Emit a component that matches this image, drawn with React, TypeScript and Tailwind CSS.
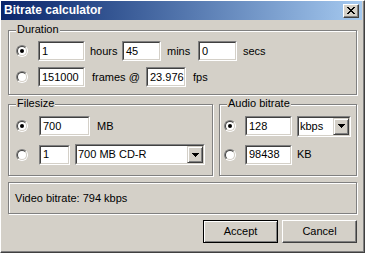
import React from "react";

const Radio = ({ checked = false }: { checked?: boolean }) => (
  <span className="flex w-[12px] h-[12px] shrink-0 rounded-full border border-t-[#808080] border-l-[#808080] border-r-white border-b-white">
    <span className="flex w-full h-full items-center justify-center rounded-full bg-white border border-t-[#404040] border-l-[#404040] border-r-[#d4d0c8] border-b-[#d4d0c8]">
      {checked && <span className="w-[4px] h-[4px] rounded-full bg-black" />}
    </span>
  </span>
);

const Field = ({ value, className }: { value: string; className: string }) => (
  <div className={`h-[20px] shrink-0 border border-t-[#808080] border-l-[#808080] border-r-white border-b-white ${className}`}>
    <div className="h-full flex items-center pl-[2px] bg-white border border-t-[#404040] border-l-[#404040] border-r-[#d4d0c8] border-b-[#d4d0c8]">
      {value}
    </div>
  </div>
);

const Combo = ({ value, className }: { value: string; className: string }) => (
  <div className={`h-[21px] shrink-0 border border-t-[#808080] border-l-[#808080] border-r-white border-b-white ${className}`}>
    <div className="h-full flex bg-white border border-t-[#404040] border-l-[#404040] border-r-[#d4d0c8] border-b-[#d4d0c8]">
      <span className="flex-1 flex items-center pl-[1px]">{value}</span>
      <span className="w-[16px] h-full flex items-center justify-center bg-[#d4d0c8] border border-t-[#d4d0c8] border-l-[#d4d0c8] border-r-[#404040] border-b-[#404040] shadow-[inset_1px_1px_#fff,inset_-1px_-1px_#808080]">
        <svg width="7" height="4" viewBox="0 0 7 4" shapeRendering="crispEdges">
          <path d="M0 0h7v1H0zM1 1h5v1H1zM2 2h3v1H2zM3 3h1v1H3z" fill="#000" />
        </svg>
      </span>
    </div>
  </div>
);

const Group = ({ label, className, children }: { label?: string; className: string; children?: React.ReactNode }) => (
  <div className={`relative shrink-0 border border-[#808080] shadow-[inset_1px_1px_#fff,1px_1px_#fff] ${className}`}>
    {label && (
      <span className="absolute left-[7px] -top-[8px] px-[1px] bg-[#d4d0c8] leading-[13px]">{label}</span>
    )}
    {children}
  </div>
);

export default function App() {
  return (
    <div className="w-[365px] h-[253px] overflow-hidden flex flex-col bg-[#d4d0c8] border-t border-l border-t-white border-l-white border-r border-b border-r-[#404040] border-b-[#404040] shadow-[inset_-1px_-1px_#808080] font-['Liberation_Sans',Arial,sans-serif] text-[11px] leading-[13px] text-black">
      {/* caption */}
      <div className="mr-[2px] h-[19px] shrink-0 flex items-center justify-between pl-[3px] pr-[3px] bg-linear-to-r from-[#0a246a] to-[#a6caf0]">
        <span className="text-white font-bold text-[12px]">Bitrate calculator</span>
        <span className="w-[16px] h-[14px] flex items-center justify-center bg-[#d4d0c8] border border-t-white border-l-white border-r-[#404040] border-b-[#404040] shadow-[inset_-1px_-1px_#808080]">
          <svg width="8" height="7" viewBox="0 0 8 7" shapeRendering="crispEdges">
            <path
              d="M0 0h2v1H0zM6 0h2v1H6zM1 1h2v1H1zM5 1h2v1H5zM2 2h4v1H2zM3 3h2v1H3zM2 4h4v1H2zM1 5h2v1H1zM5 5h2v1H5zM0 6h2v1H0zM6 6h2v1H6z"
              fill="#000"
            />
          </svg>
        </span>
      </div>

      <div className="flex flex-col pl-[7px] pt-[10px]">
        <Group label="Duration" className="w-[349px] h-[65px] flex flex-col pt-[10px] pl-[7px]">
          <div className="flex items-center h-[20px]">
            <Radio checked />
            <Field value="1" className="ml-[10px] w-[47px]" />
            <span className="ml-[5px] w-[32px]">hours</span>
            <Field value="45" className="w-[39px]" />
            <span className="ml-[6px] w-[31px]">mins</span>
            <Field value="0" className="w-[39px]" />
            <span className="ml-[6px]">secs</span>
          </div>
          <div className="flex items-center h-[20px] mt-[6px]">
            <Radio />
            <Field value="151000" className="ml-[10px] w-[47px]" />
            <span className="ml-[7px] w-[54px]">frames @</span>
            <Field value="23.976" className="w-[40px]" />
            <span className="ml-[7px]">fps</span>
          </div>
        </Group>

        <div className="flex gap-[6px] mt-[9px]">
          <Group label="Filesize" className="w-[205px] h-[72px] flex flex-col pt-[11px] pl-[7px]">
            <div className="flex items-center h-[20px]">
              <Radio checked />
              <Field value="700" className="ml-[11px] w-[51px]" />
              <span className="ml-[7px]">MB</span>
            </div>
            <div className="flex items-center h-[21px] mt-[8px]">
              <Radio />
              <Field value="1" className="ml-[11px] w-[31px]" />
              <Combo value="700 MB CD-R" className="ml-[5px] w-[130px]" />
            </div>
          </Group>
          <Group label="Audio bitrate" className="w-[138px] h-[72px] flex flex-col pt-[11px] pl-[4px]">
            <div className="flex items-center h-[20px]">
              <Radio checked />
              <Field value="128" className="ml-[9px] w-[47px]" />
              <Combo value="kbps" className="ml-[5px] w-[54px]" />
            </div>
            <div className="flex items-center h-[21px] mt-[8px]">
              <Radio />
              <Field value="98438" className="ml-[9px] w-[47px]" />
              <span className="ml-[5px]">KB</span>
            </div>
          </Group>
        </div>

        <Group className="w-[349px] h-[32px] mt-[6px] flex items-center pl-[6px]">
          <span>Video bitrate: 794 kbps</span>
        </Group>

        <div className="w-[349px] flex justify-end gap-[4px] mt-[6px]">
          <button className="w-[75px] h-[23px] bg-[#d4d0c8] border border-black shadow-[inset_1px_1px_#fff,inset_-1px_-1px_#808080]">
            Accept
          </button>
          <button className="w-[75px] h-[23px] bg-[#d4d0c8] border border-t-white border-l-white border-r-[#404040] border-b-[#404040] shadow-[inset_-1px_-1px_#808080]">
            Cancel
          </button>
        </div>
      </div>
    </div>
  );
}
